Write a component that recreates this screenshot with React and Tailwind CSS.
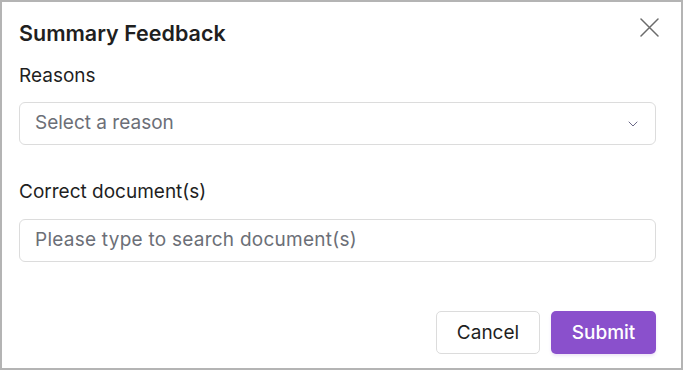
import React from 'react'
import { ChevronDown } from 'lucide-react'

const App = () => {
  return (
    <div className="w-[683px] h-[370px] bg-white border-2 border-[#b4b4b4] font-['Inter',sans-serif] text-[#1f1f1f] relative">
      <button className="absolute top-[16px] right-[22px] text-[#6b6b6b]">
        <svg width="19" height="19" viewBox="0 0 19 19" fill="none" stroke="currentColor" strokeWidth="1.5" strokeLinecap="round">
          <path d="M1 1L18 18M18 1L1 18" />
        </svg>
      </button>
      <div className="pl-[17px] pr-[25px] pt-[18px]">
        <h2 className="text-[21.5px] font-semibold leading-[26px]">Summary Feedback</h2>
        <div className="mt-[17px] text-[19px] leading-[26px]">Reasons</div>
        <div className="mt-[13px] h-[43px] border border-[#dcdcdc] rounded-[6px] flex items-center justify-between pl-[15px] pr-[14px]">
          <span className="text-[19px] text-[#6c6f77]">Select a reason</span>
          <ChevronDown className="w-4 h-4 text-[#6a6887]" strokeWidth={1.5} />
        </div>
        <div className="mt-[34px] text-[19px] leading-[26px]">Correct document(s)</div>
        <div className="mt-[14px] h-[43px] border border-[#dcdcdc] rounded-[6px] flex items-center pl-[15px]">
          <span className="text-[19px] tracking-[0.25px] text-[#6c6f77]">Please type to search document(s)</span>
        </div>
        <div className="mt-[49px] flex justify-end gap-[11px]">
          <button className="h-[43px] w-[104px] border border-[#dcdcdc] rounded-[5px] text-[19px] text-[#1f1f1f] bg-white pt-[1px]">Cancel</button>
          <button className="h-[43px] w-[105px] rounded-[5px] text-[19px] font-medium text-white bg-[#8a50cc] shadow-[0_2px_3px_rgba(138,80,204,0.15)] pt-[1px]">Submit</button>
        </div>
      </div>
    </div>
  )
}

export default App
